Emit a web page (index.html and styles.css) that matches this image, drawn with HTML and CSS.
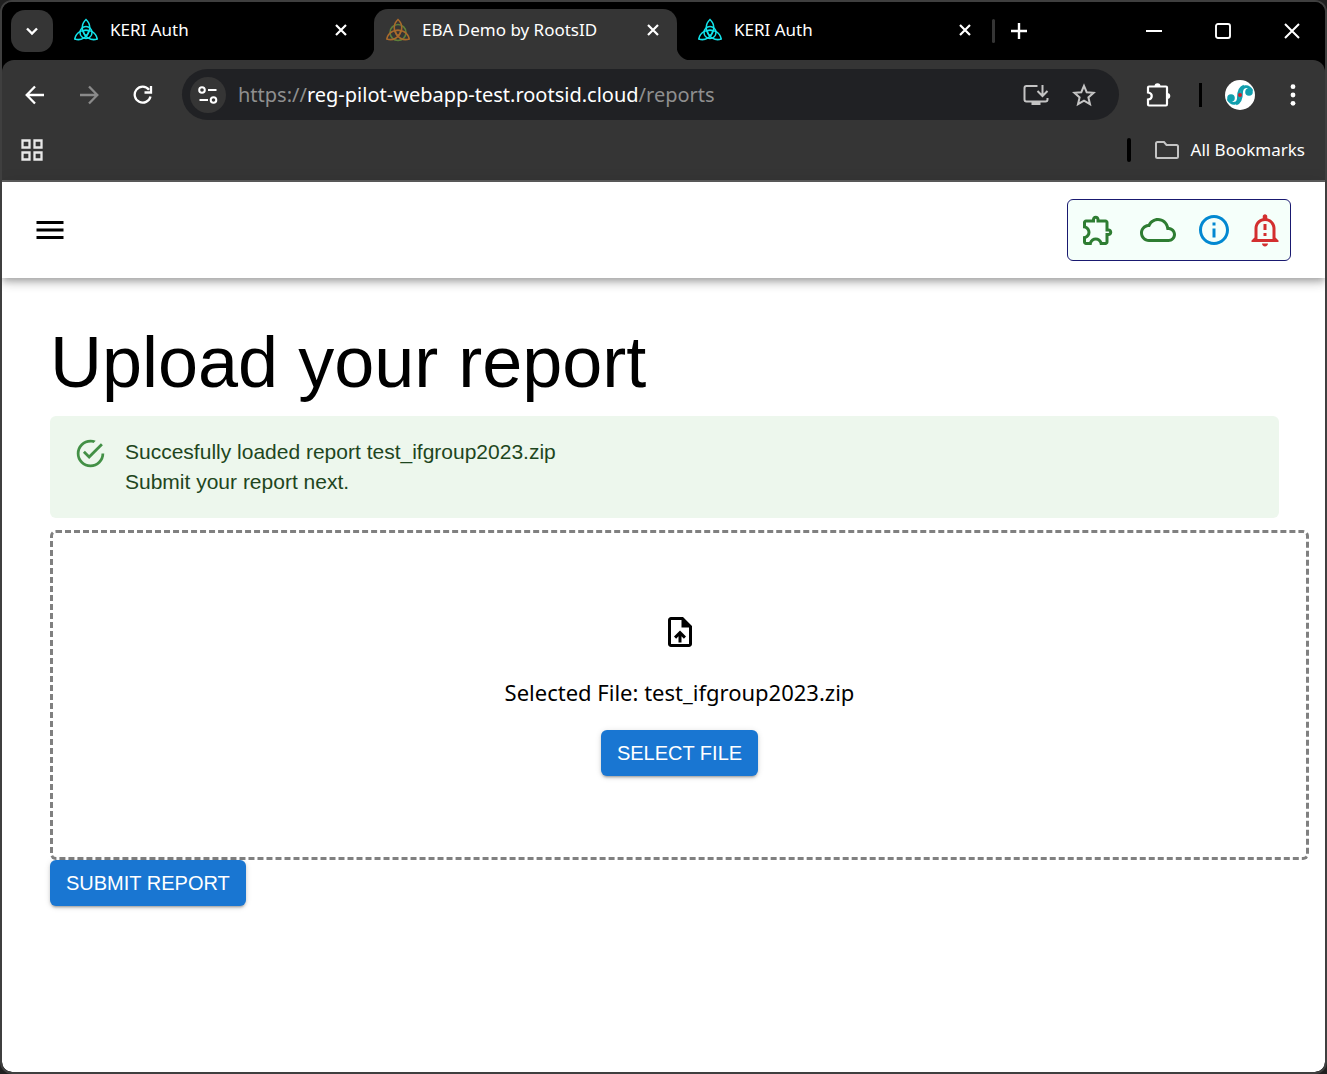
FILE: index.html
```html
<!DOCTYPE html>
<html lang="en">
<head>
<meta charset="utf-8">
<title>EBA Demo by RootsID</title>
<link rel="stylesheet" href="styles.css">
</head>
<body>
<svg class="defs" aria-hidden="true">
  <symbol id="keri" viewBox="0 0 24 24">
    <g fill="none" stroke="#12e3ea" stroke-width="1.500">
      <path d="M12 1.500C7 6 7 13 12 18C17 13 17 6 12 1.500z"/>
      <path d="M12 1.500C7 6 7 13 12 18C17 13 17 6 12 1.500z" transform="rotate(120 12 14.500)"/>
      <path d="M12 1.500C7 6 7 13 12 18C17 13 17 6 12 1.500z" transform="rotate(240 12 14.500)"/>
      <circle cx="12" cy="14.500" r="6"/>
    </g>
  </symbol>
  <symbol id="close" viewBox="0 0 12 12"><path d="M1 1l10 10M11 1L1 11" fill="none" stroke="#fff" stroke-width="2.200"/></symbol>
</svg>
<div class="window">
  <div class="tabstrip">
    <button class="tab-search" aria-label="Search tabs"><svg width="14" height="9" viewBox="0 0 14 9"><path d="M2 1.500l5 5 5-5" fill="none" stroke="#fff" stroke-width="2.400"/></svg></button>
    <div class="tabs">
      <div class="tab">
        <svg class="favicon" width="24" height="24"><use href="#keri"/></svg>
        <span class="tab-title">KERI Auth</span>
        <button class="tab-close" aria-label="Close tab"><svg width="12" height="12"><use href="#close"/></svg></button>
      </div>
      <div class="tab active">
        <svg class="favicon" width="24" height="24" viewBox="0 0 24 24"><circle cx="12" cy="14.500" r="8" fill="none" stroke="#5d7f3a" stroke-width="1.600"/><g fill="none" stroke="#a86a2c" stroke-width="1.600"><path d="M12 1.500C7 6 7 13 12 18C17 13 17 6 12 1.500z"/><path d="M12 1.500C7 6 7 13 12 18C17 13 17 6 12 1.500z" transform="rotate(120 12 14.500)"/><path d="M12 1.500C7 6 7 13 12 18C17 13 17 6 12 1.500z" transform="rotate(240 12 14.500)"/></g></svg>
        <span class="tab-title">EBA Demo by RootsID</span>
        <button class="tab-close" aria-label="Close tab"><svg width="12" height="12"><use href="#close"/></svg></button>
      </div>
      <div class="tab">
        <svg class="favicon" width="24" height="24"><use href="#keri"/></svg>
        <span class="tab-title">KERI Auth</span>
        <button class="tab-close" aria-label="Close tab"><svg width="12" height="12"><use href="#close"/></svg></button>
      </div>
    </div>
    <span class="tab-divider"></span>
    <button class="new-tab" aria-label="New tab"><svg width="16" height="16" viewBox="0 0 16 16"><path d="M8 0v16M0 8h16" stroke="#fff" stroke-width="2.400"/></svg></button>
    <div class="window-controls">
      <button aria-label="Minimize"><svg width="16" height="16" viewBox="0 0 16 16"><path d="M0 8h16" stroke="#fff" stroke-width="2"/></svg></button>
      <button aria-label="Maximize"><svg width="16" height="16" viewBox="0 0 16 16"><rect x="1" y="1" width="14" height="14" rx="2" fill="none" stroke="#fff" stroke-width="1.900"/></svg></button>
      <button aria-label="Close"><svg width="16" height="16" viewBox="0 0 16 16"><path d="M1 1l14 14M15 1L1 15" stroke="#fff" stroke-width="2"/></svg></button>
    </div>
  </div>

  <div class="toolbar">
    <button class="nav-button" aria-label="Back"><svg width="20" height="20" viewBox="0 0 20 20"><path d="M19 10H2M10 1.500L1.700 10l8.300 8.500" fill="none" stroke="#fff" stroke-width="2.300"/></svg></button>
    <button class="nav-button" aria-label="Forward"><svg width="20" height="20" viewBox="0 0 20 20"><path d="M1 10h17M10 1.500l8.300 8.500L10 18.500" fill="none" stroke="#8a8a8a" stroke-width="2.300"/></svg></button>
    <button class="nav-button" aria-label="Reload"><svg width="20" height="20" viewBox="0 0 20 20"><path d="M17.500 11.500A8 8 0 1 1 16 4.700M18 1v6.500h-6.500" fill="none" stroke="#fff" stroke-width="2.300"/></svg></button>
    <div class="omnibox">
      <button class="site-info" aria-label="Site information"><svg width="20" height="18" viewBox="0 0 20 18"><g fill="none" stroke="#fff" stroke-width="2"><circle cx="4" cy="4" r="2.800"/><path d="M10 4h8.500M1.500 14H10"/><circle cx="15.500" cy="14" r="2.800"/></g></svg></button>
      <a class="url" href="#">https://<span class="url-host">reg-pilot-webapp-test.rootsid.cloud</span>/reports</a>
      <button class="omnibox-action" aria-label="Install app"><svg width="26" height="22" viewBox="0 0 26 22"><g fill="none" stroke="#c4c4c4" stroke-width="2"><path d="M14.500 2H3.500Q1.500 2 1.500 4v11.500q0 2 2 2h19q2 0 2-2V14"/><path d="M19.500 1v10.500M14.500 7l5 5 5-5"/></g><path d="M8.500 17.500h9V21h-9z" fill="#c4c4c4"/></svg></button>
      <button class="omnibox-action" aria-label="Bookmark this page"><svg width="24" height="24" viewBox="0 0 24 24"><path d="M12 2.800l2.700 6.400 6.900.6-5.200 4.600 1.600 6.800-6-3.600-6 3.600 1.600-6.800-5.200-4.600 6.900-.6z" fill="none" stroke="#c4c4c4" stroke-width="2"/></svg></button>
    </div>
    <button class="ext-button" aria-label="Extensions"><svg width="26" height="26" viewBox="0 0 26 26"><path d="M3 4.500h17q1 0 1 1V22q0 1.500-1 1.500H3q-1 0-1-1v-5c5-.5 5-6.500 0-7V5.500q0-1 1-1z" fill="none" stroke="#fff" stroke-width="2.200"/><path d="M8.500 4.500a3 3.300 0 0 1 6 0zM21 11a3.300 3 0 0 1 0 6z" fill="#fff"/></svg></button>
    <span class="toolbar-divider"></span>
    <button class="profile" aria-label="Profile"><svg width="30" height="30" viewBox="0 0 30 30"><circle cx="15" cy="15" r="15" fill="#fff"/><g fill="none" stroke="#119fae" stroke-width="2.800"><path d="M3 19c4 6.500 10.500 5.500 10.500-2 0-6 1.500-9.500 5.500-11"/><path d="M27 11c-4-6.500-10.500-5.500-10.500 2 0 6-1.500 9.500-5.500 11"/></g><g fill="#119fae"><circle cx="6" cy="18" r="3.800"/><circle cx="24" cy="12" r="3.800"/></g><circle cx="15" cy="15" r="2" fill="#d0202c"/></svg></button>
    <button class="menu-dots" aria-label="Menu"><svg width="6" height="22" viewBox="0 0 6 22"><g fill="#fff"><circle cx="3" cy="2.700" r="2.400"/><circle cx="3" cy="11" r="2.400"/><circle cx="3" cy="19.300" r="2.400"/></g></svg></button>
  </div>

  <div class="bookmarks">
    <button class="apps" aria-label="Apps"><svg width="22" height="22" viewBox="0 0 22 22"><g fill="none" stroke="#e8e8e8" stroke-width="2.300"><path d="M1.500 1.500h7v7h-7zM13.500 1.500h7v7h-7zM1.500 13.500h7v7h-7zM13.500 13.500h7v7h-7z"/></g></svg></button>
    <span class="bookmarks-divider"></span>
    <button class="all-bookmarks"><svg width="24" height="18" viewBox="0 0 24 18"><path d="M1 2.500Q1 1 2.500 1H9l2.500 3H21.500Q23 4 23 5.500v10q0 1.500-1.500 1.500h-19Q1 17 1 15.500z" fill="none" stroke="#c4c4c4" stroke-width="2"/></svg>All Bookmarks</button>
  </div>

  <div class="page">
    <header class="appbar">
      <button class="menu-button" aria-label="Open menu"><svg width="36" height="36" viewBox="0 0 24 24"><path d="M3 18h18v-2H3v2zm0-5h18v-2H3v2zm0-7v2h18V6H3z"/></svg></button>
      <div class="status">
        <button class="status-wide ok" aria-label="Extension"><svg width="36" height="36" viewBox="0 0 24 24"><path d="M10.500 4.500c.28 0 .5.22.5.5v2h6v6h2c.28 0 .5.22.5.5s-.22.5-.5.5h-2v6h-2.120c-.68-1.750-2.390-3-4.380-3s-3.700 1.250-4.380 3H4v-2.120c1.750-.68 3-2.390 3-4.380 0-1.990-1.240-3.700-2.990-4.380L4 7h6V5c0-.28.22-.5.5-.5m0-2C9.120 2.500 8 3.620 8 5H4c-1.100 0-1.990.9-1.990 2v3.800h.29c1.490 0 2.700 1.210 2.700 2.700s-1.210 2.700-2.700 2.700H2V20c0 1.100.9 2 2 2h3.800v-.3c0-1.490 1.210-2.700 2.700-2.700s2.700 1.210 2.700 2.700v.3H17c1.100 0 2-.9 2-2v-4c1.380 0 2.500-1.120 2.500-2.500S20.380 11 19 11V7c0-1.100-.9-2-2-2h-4c0-1.380-1.120-2.500-2.500-2.500z"/></svg></button>
        <button class="status-wide ok" aria-label="Cloud"><svg width="36" height="36" viewBox="0 0 24 24"><path d="M19.350 10.040C18.670 6.590 15.640 4 12 4 9.110 4 6.600 5.640 5.350 8.040 2.340 8.360 0 10.910 0 14c0 3.310 2.690 6 6 6h13c2.760 0 5-2.240 5-5 0-2.640-2.050-4.780-4.650-4.960zM19 18H6c-2.210 0-4-1.790-4-4 0-2.050 1.530-3.760 3.560-3.970l1.070-.11.5-.95C8.080 7.140 9.940 6 12 6c2.620 0 4.880 1.860 5.390 4.430l.3 1.500 1.530.11c1.560.1 2.780 1.410 2.780 2.960 0 1.650-1.350 3-3 3z"/></svg></button>
        <button class="info" aria-label="Information"><svg width="36" height="36" viewBox="0 0 24 24"><path d="M11 7h2v2h-2zm0 4h2v6h-2zm1-9C6.480 2 2 6.480 2 12s4.480 10 10 10 10-4.480 10-10S17.520 2 12 2zm0 18c-4.410 0-8-3.590-8-8s3.590-8 8-8 8 3.590 8 8-3.590 8-8 8z"/></svg></button>
        <button class="alarm" aria-label="Alerts"><svg width="36" height="36" viewBox="0 0 24 24"><path d="M10.010 21.010c0 1.100.89 1.990 1.990 1.990s1.990-.89 1.990-1.990h-3.980zM12 6c2.760 0 5 2.240 5 5v7H7v-7c0-2.760 2.240-5 5-5m0-4.500c-.83 0-1.500.67-1.500 1.500v1.170C7.360 4.850 5 7.650 5 11v6l-2 2v1h18v-1l-2-2v-6c0-3.350-2.360-6.150-5.500-6.830V3c0-.83-.67-1.500-1.500-1.500zM11 8h2v4h-2zm0 6h2v2h-2z"/></svg></button>
      </div>
    </header>
    <main class="content">
      <h1>Upload your report</h1>
      <div class="alert" role="alert">
        <svg width="33" height="33" viewBox="0 0 24 24"><path d="M20,12A8,8 0 0,1 12,20A8,8 0 0,1 4,12A8,8 0 0,1 12,4C12.760,4 13.500,4.110 14.200,4.310L15.770,2.740C14.610,2.260 13.340,2 12,2A10,10 0 0,0 2,12A10,10 0 0,0 12,22A10,10 0 0,0 22,12M7.910,10.080L6.500,11.500L11,16L21,6L19.590,4.580L11,13.170L7.910,10.080Z" fill="#439046"/></svg>
        <div>Succesfully loaded report test_ifgroup2023.zip<br>Submit your report next.</div>
      </div>
      <section class="dropzone">
        <svg width="36" height="36" viewBox="0 0 24 24"><path d="M14 2H6c-1.100 0-1.990.9-1.990 2L4 20c0 1.100.89 2 1.990 2H18c1.100 0 2-.9 2-2V8l-6-6zm4 18H6V4h7v5h5v11zM8 15.010l1.410 1.410L11 14.840V19h2v-4.160l1.590 1.590L16 15.010 12.010 11z"/></svg>
        <p>Selected File: test_ifgroup2023.zip</p>
        <button class="primary">SELECT FILE</button>
      </section>
      <button class="primary">SUBMIT REPORT</button>
    </main>
  </div>
</div>
</body>
</html>
```
FILE: styles.css
```css
* {
  box-sizing: border-box;
}

body {
  margin: 0;
  background: #202020;
  font-family: "Noto Sans", "Open Sans", sans-serif;
}

button {
  display: flex;
  align-items: center;
  justify-content: center;
  flex: none;
  margin: 0;
  padding: 0;
  border: 0;
  background: none;
  color: inherit;
  font: inherit;
}

svg {
  display: block;
  flex: none;
}

.defs {
  position: absolute;
  width: 0;
  height: 0;
}

.window {
  display: flex;
  flex-direction: column;
  min-height: 100vh;
  border: 2px solid #3f3f3f;
  border-radius: 12px;
  background: #000;
  overflow: hidden;
  color: #fff;
}

/* Tab strip */
.tabstrip {
  display: flex;
  align-items: center;
  height: 58px;
  padding-left: 9px;
  background: #000;
}

.tab-search {
  width: 42px;
  height: 42px;
  border-radius: 14px;
  background: #353535;
}

.tabs {
  display: flex;
  align-self: stretch;
  flex: 0 1 936px;
  gap: 9px;
  min-width: 0;
  padding: 7px 0 0 9px;
}

.tab {
  position: relative;
  display: flex;
  align-items: center;
  flex: 1 1 0;
  gap: 12px;
  min-width: 0;
  padding: 0 12px 9px;
  font-size: 17px;
  line-height: 26px;
}

.tab.active {
  border-radius: 14px 14px 0 0;
  background: #353535;
}

/* Flared feet that join the active tab to the toolbar */
.tab.active::before,
.tab.active::after {
  content: "";
  position: absolute;
  bottom: 0;
  width: 14px;
  height: 14px;
}

.tab.active::before {
  right: 100%;
  background: radial-gradient(circle at 0 0, transparent 14px, #353535 15px);
}

.tab.active::after {
  left: 100%;
  background: radial-gradient(circle at 100% 0, transparent 14px, #353535 15px);
}

.tab-title {
  flex: 1;
  overflow: hidden;
  white-space: nowrap;
}

.tab-close {
  width: 24px;
  height: 24px;
}

.tab-divider {
  width: 3px;
  height: 24px;
  margin-left: 3px;
  border-radius: 2px;
  background: #353535;
}

.new-tab {
  width: 48px;
  height: 42px;
}

.window-controls {
  display: flex;
  gap: 3px;
  margin-left: auto;
}

.window-controls button {
  width: 66px;
  height: 56px;
}

/* Toolbar */
.toolbar {
  display: flex;
  align-items: center;
  height: 69px;
  padding: 0 17px 0 6px;
  border-radius: 12px 12px 0 0;
  background: #353535;
}

.nav-button {
  width: 54px;
  height: 42px;
}

.omnibox {
  display: flex;
  align-items: center;
  flex: 1;
  min-width: 0;
  height: 51px;
  margin-left: 12px;
  padding: 0 11px 0 8px;
  border-radius: 26px;
  background: #202124;
}

.site-info {
  width: 36px;
  height: 36px;
  border-radius: 50%;
  background: #353535;
}

.url {
  flex: 1;
  margin-left: 12px;
  overflow: hidden;
  color: #8f8f8f;
  font-size: 20px;
  line-height: 30px;
  text-decoration: none;
  white-space: nowrap;
}

.url-host {
  color: #fff;
}

.omnibox-action {
  width: 48px;
  height: 42px;
}

.ext-button {
  width: 80px;
  height: 42px;
}

.toolbar-divider {
  width: 3px;
  height: 24px;
  background: #000;
}

.profile {
  width: 76px;
  height: 42px;
}

.menu-dots {
  width: 30px;
  height: 42px;
}

/* Bookmarks bar */
.bookmarks {
  display: flex;
  align-items: center;
  height: 53px;
  padding: 0 20px 9px 19px;
  border-bottom: 2px solid #5f5f5f;
  background: #353535;
}

.bookmarks-divider {
  width: 4px;
  height: 24px;
  margin-left: auto;
  border-radius: 2px;
  background: #000;
}

.all-bookmarks {
  gap: 12px;
  margin-left: 24px;
  font-size: 17px;
  line-height: 26px;
}

/* Web page */
.page {
  flex: 1;
  border-radius: 0 0 10px 10px;
  background: #fff;
  color: #000;
}

.appbar {
  display: flex;
  align-items: center;
  justify-content: space-between;
  height: 96px;
  padding: 0 34px 0 30px;
  box-shadow: 0 3px 6px -1px rgba(0, 0, 0, .2), 0 6px 8px rgba(0, 0, 0, .14), 0 1px 15px rgba(0, 0, 0, .12);
}

.status {
  display: flex;
  border: 1px solid #191970;
  border-radius: 6px;
  background: #f5fffa;
}

.status button {
  width: 51px;
  height: 60px;
}

.status .status-wide {
  width: 60px;
}

.appbar svg,
.dropzone svg {
  fill: currentColor;
}

.ok {
  color: #2e7d32;
}

.info {
  color: #0288d1;
}

.alarm {
  color: #d32f2f;
}

.content {
  padding: 42px 46px 48px 48px;
}

h1 {
  margin: 0 0 12px;
  font: 400 72px/84px "Liberation Sans", Arial, sans-serif;
}

.alert {
  display: flex;
  gap: 18px;
  margin-bottom: 12px;
  padding: 21px 24px;
  border-radius: 6px;
  background: #edf7ed;
  color: #1e4620;
  font: 21px/30px "Liberation Sans", Arial, sans-serif;
}

.dropzone {
  display: flex;
  flex-direction: column;
  align-items: center;
  margin-right: -30px;
  padding: 81px 24px;
  border: 3px dashed #808080;
  border-radius: 6px;
}

.dropzone p {
  margin: 24px 0 20px;
  font-size: 22px;
  line-height: 36px;
}

.primary {
  height: 46px;
  padding: 0 16px;
  border-radius: 6px;
  background: #1976d2;
  box-shadow: 0 3px 2px -2px rgba(0, 0, 0, .2), 0 2px 3px rgba(0, 0, 0, .14), 0 1px 6px rgba(0, 0, 0, .12);
  color: #fff;
  font: 20px/36px "Liberation Sans", Arial, sans-serif;
}
```
